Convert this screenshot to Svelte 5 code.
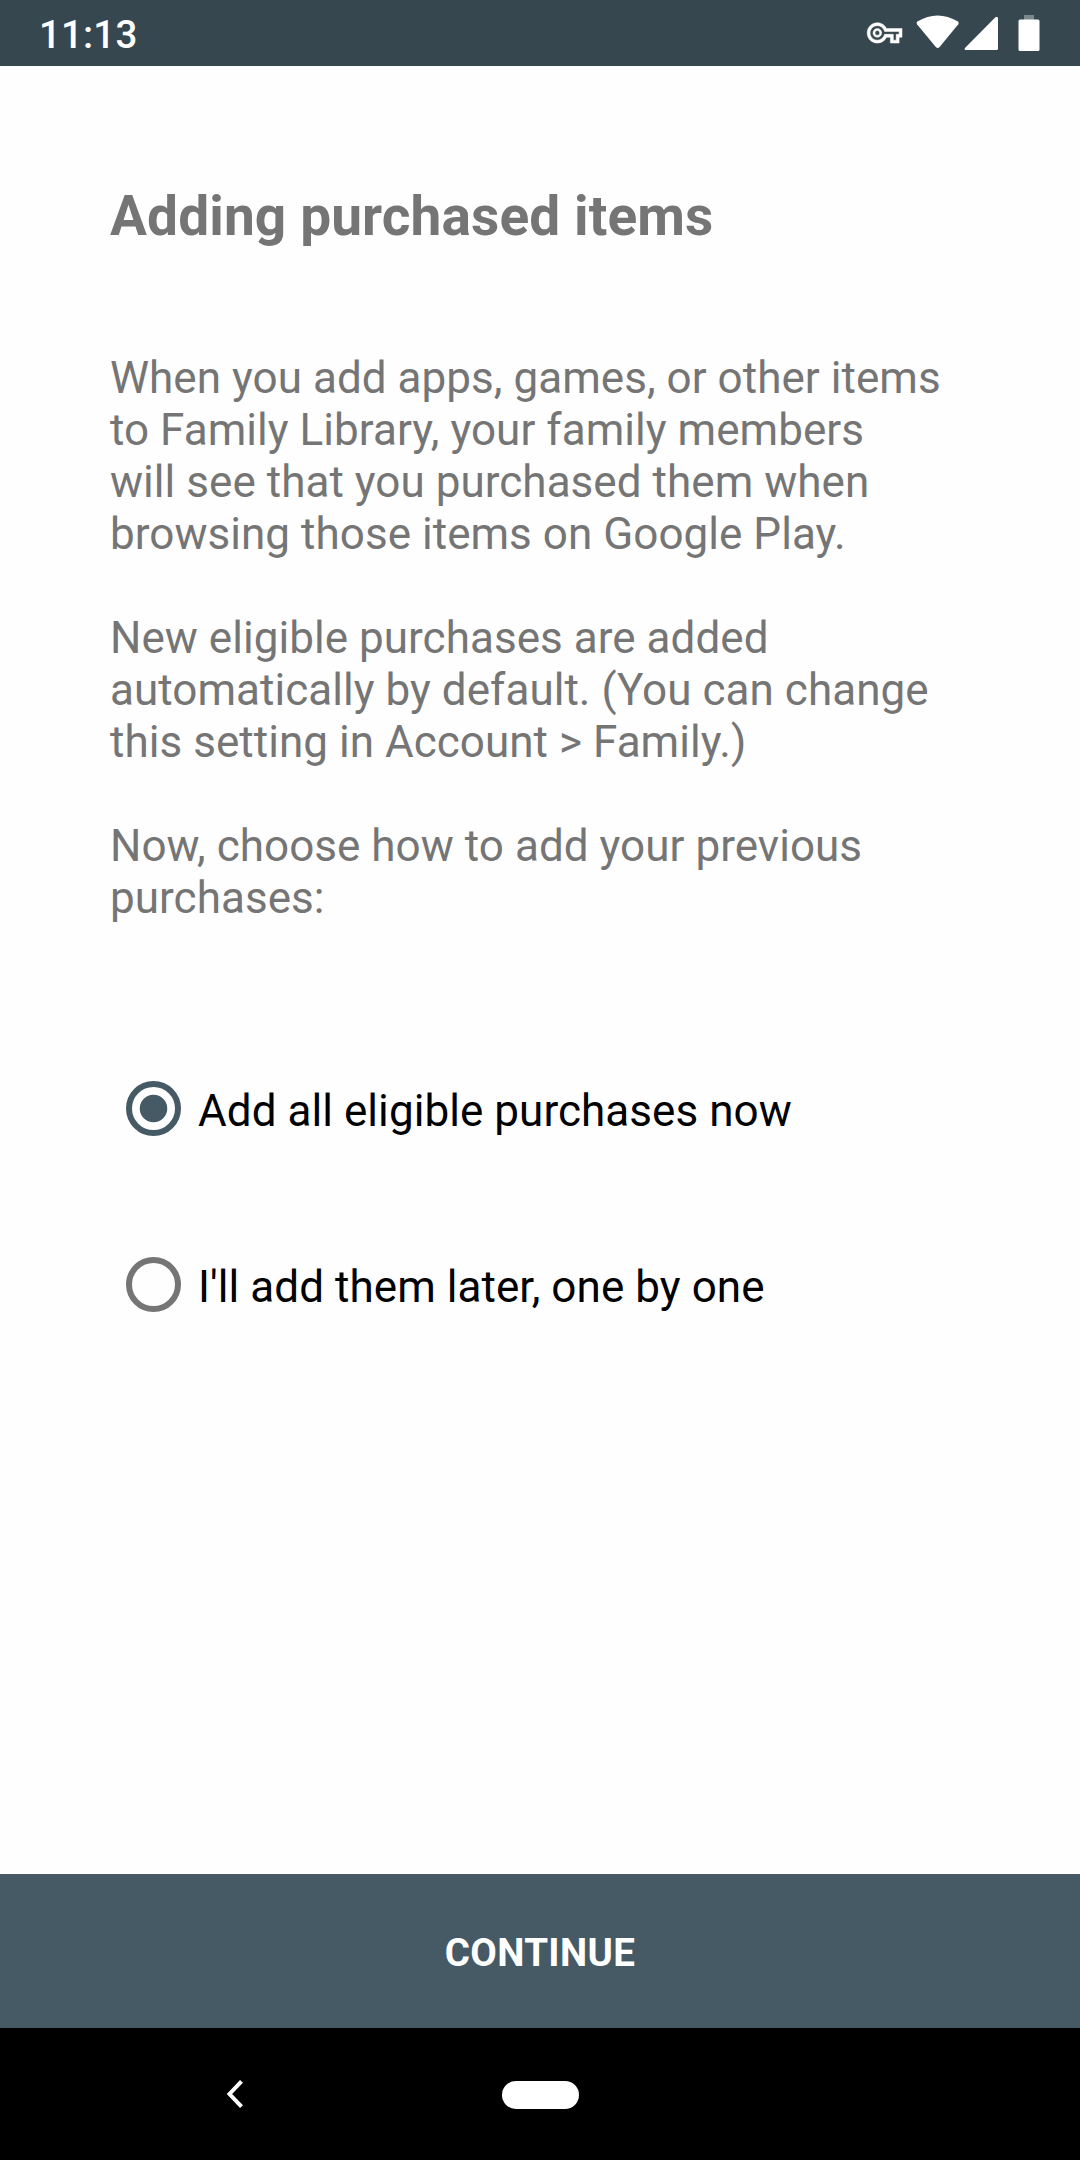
<script>
    let selected = "all";

    const paragraphs = [
        [
            "When you add apps, games, or other items",
            "to Family Library, your family members",
            "will see that you purchased them when",
            "browsing those items on Google Play.",
        ],
        [
            "New eligible purchases are added",
            "automatically by default. (You can change",
            "this setting in Account > Family.)",
        ],
        ["Now, choose how to add your previous", "purchases:"],
    ];

    const options = [
        { id: "all", label: "Add all eligible purchases now" },
        { id: "later", label: "I'll add them later, one by one" },
    ];
</script>

<div class="screen">
    <header>
        <span class="time">11:13</span>
        <svg class="status" width="180" height="66" viewBox="860 0 180 66">
            <path
                class="key"
                transform="translate(867.2 15.5) scale(1.45)"
                d="M22 19h-6v-4h-2.68c-1.14 2.42-3.6 4-6.32 4-3.86 0-7-3.14-7-7s3.14-7 7-7c2.72 0 5.17 1.58 6.32 4H24v6h-2v4zm-4-2h2v-4h2v-2H11.94l-.23-.67C11.01 8.34 9.11 7 7 7c-2.76 0-5 2.24-5 5s2.24 5 5 5c2.11 0 4.01-1.34 4.71-3.33l.23-.67H18v4zM7 15c-1.65 0-3-1.35-3-3s1.35-3 3-3 3 1.35 3 3-1.35 3-3 3zm0-4.600c-.9 0-1.600.7-1.600 1.600s.7 1.600 1.600 1.600 1.600-.7 1.600-1.600-.7-1.600-1.600-1.600z"
            />
            <path
                d="M917.3 21.5Q937.7 9.5 958 21.5Q959.3 22.7 958.3 24.3L939.4 47.2Q937.7 48.8 936 47.2L917 24.3Q916 22.7 917.3 21.5Z"
            />
            <path
                d="M995.4 17.3Q998 15.7 998 18.5V48.5Q998 50 996.5 50H966Q963.5 50 965.2 47.8Z"
            />
            <path d="M1024 15h10v5h-10z" opacity="0.35" />
            <rect x="1018.5" y="19.5" width="21" height="31.5" rx="1.5" />
        </svg>
    </header>

    <main>
        <h1>Adding purchased items</h1>
        {#each paragraphs as lines}
            <p>
                {#each lines as line}
                    <span>{line}</span>
                {/each}
            </p>
        {/each}

        <div class="options">
            {#each options as option}
                <label>
                    <input type="radio" name="mode" value={option.id} bind:group={selected} />
                    <span>{option.label}</span>
                </label>
            {/each}
        </div>
    </main>

    <button class="continue">CONTINUE</button>

    <nav>
        <svg class="back" width="20" height="30" viewBox="0 0 20 30">
            <path d="M16.5 2.3L4.5 15L16.5 27.7" />
        </svg>
        <div class="pill"></div>
    </nav>
</div>

<style>
    :global(body) {
        margin: 0;
        background: #fff;
    }

    .screen {
        width: 1080px;
        height: 2160px;
        display: flex;
        flex-direction: column;
        font-family: Roboto, "Liberation Sans", sans-serif;
        background: #fefefe;
    }

    header {
        height: 66px;
        padding: 0 40px 0 39px;
        box-sizing: border-box;
        display: flex;
        justify-content: space-between;
        background: #37474f;
        color: #fff;
    }

    .time {
        font-size: 38.5px;
        font-weight: 500;
        line-height: 70px;
        letter-spacing: 0.15px;
    }

    .status {
        fill: #fff;
    }

    .key {
        stroke: #fff;
        stroke-width: 0.35;
    }

    main {
        flex: 1;
        padding: 118px 110px 0;
        color: #757575;
    }

    h1 {
        font-size: 55px;
        font-weight: 700;
        line-height: 64px;
        letter-spacing: 0.11px;
        margin: 0 0 104px;
    }

    p {
        font-size: 44px;
        line-height: 52px;
        letter-spacing: 0.04px;
        margin: 0 0 52px;
    }

    p span {
        display: block;
        white-space: nowrap;
    }

    .options {
        margin-top: 97px;
    }

    label {
        height: 176px;
        display: flex;
        align-items: center;
        font-size: 44px;
        line-height: 52px;
        letter-spacing: 0.06px;
        color: #000;
    }

    label span {
        padding-top: 4px;
    }

    input {
        appearance: none;
        width: 55px;
        height: 55px;
        margin: 0 17px 1px 16px;
        box-sizing: border-box;
        border: 6px solid #757575;
        border-radius: 50%;
    }

    input:checked {
        border-color: #455a64;
        background: radial-gradient(circle, #455a64 13.3px, transparent 14.2px);
    }

    .continue {
        height: 154px;
        padding: 3px 0 0;
        border: none;
        background: #455a64;
        color: #fff;
        font-family: inherit;
        font-size: 38.5px;
        font-weight: 700;
        letter-spacing: 0.35px;
    }

    nav {
        height: 132px;
        display: grid;
        grid-template-columns: 245px 1fr 245px;
        align-items: center;
        background: #000;
    }

    .back {
        justify-self: end;
        fill: none;
        stroke: #fff;
        stroke-width: 4;
    }

    .pill {
        justify-self: center;
        width: 77px;
        height: 28px;
        margin-top: 1px;
        border-radius: 14px;
        background: #fff;
    }
</style>
